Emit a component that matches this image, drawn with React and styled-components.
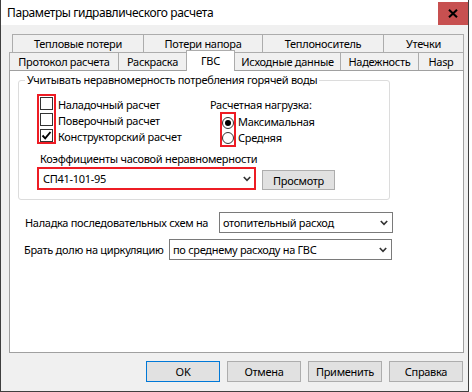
import React from "react";
import styled, { createGlobalStyle } from "styled-components";

const Global = createGlobalStyle`
  html, body { margin: 0; padding: 0; background: #ffffff; }
  body {
    font-family: "Noto Sans", "Open Sans", sans-serif;
    font-size: 11px;
    letter-spacing: -0.3px;
    color: #000;
  }
  * { box-sizing: border-box; }
`;

const Window = styled.div`
  width: 469px;
  height: 392px;
  border: 1px solid #3f3f3f;
  border-top: none;
  background: #f0f0f0;
  display: flex;
  flex-direction: column;
`;

const TitleBar = styled.div`
  height: 25px;
  background: #ffffff;
  display: flex;
  align-items: flex-start;
  justify-content: space-between;
`;

const Title = styled.div`
  padding-left: 6px;
  line-height: 25px;
  font-size: 12px;
  letter-spacing: -0.4px;
`;

const CloseButton = styled.div`
  width: 30px;
  height: 23px;
  margin-top: 2px;
  background: #c75050;
  display: flex;
  align-items: center;
  justify-content: center;
`;

const Body = styled.div`
  flex: 1;
  padding: 9px 0 0 8px;
  display: flex;
  flex-direction: column;
`;

const TabRow = styled.div`
  display: flex;
  height: 19px;
  align-items: flex-start;
  margin-left: ${(p) => p.$indent || 0}px;
  margin-bottom: -1px;
`;

const Tab = styled.div`
  width: ${(p) => p.$w}px;
  height: ${(p) => (p.$active ? 21 : 19)}px;
  margin-top: ${(p) => (p.$active ? -2 : 0)}px;
  margin-left: -1px;
  &:first-child { margin-left: 0; }
  border: 1px solid #acacac;
  border-bottom: ${(p) => (p.$active ? "none" : "1px solid #acacac")};
  background: ${(p) => (p.$active ? "#ffffff" : "#f0f0f0")};
  position: relative;
  z-index: ${(p) => (p.$active ? 2 : 1)};
  display: flex;
  justify-content: center;
  align-items: ${(p) => (p.$active ? "flex-start" : "center")};
  padding-top: ${(p) => (p.$active ? 2 : 0)}px;
  line-height: 15px;
  white-space: nowrap;
`;

const Panel = styled.div`
  width: 455px;
  height: 283px;
  background: #ffffff;
  border: 1px solid #a0a0a0;
  padding: 9px 0 0 8px;
  display: flex;
  flex-direction: column;
  position: relative;
  z-index: 1;
`;

const Group = styled.div`
  position: relative;
  width: 372px;
  height: 120px;
  border: 1px solid #dcdcdc;
  border-radius: 3px;
  padding: 13px 0 0 18px;
  display: flex;
  flex-direction: column;
`;

const Legend = styled.div`
  position: absolute;
  left: 6px;
  top: -8px;
  padding: 0 2px;
  background: #ffffff;
  line-height: 14px;
  white-space: nowrap;
`;

const TopArea = styled.div`
  display: flex;
  height: 52px;
`;

const CheckCol = styled.div`
  width: 173px;
  display: flex;
`;

const RedBox = styled.div`
  border: 2px solid #ed1c24;
  display: flex;
  flex-direction: column;
  gap: ${(p) => p.$gap}px;
  padding: ${(p) => p.$pad};
  align-self: flex-start;
`;

const LabelCol = styled.div`
  display: flex;
  flex-direction: column;
  padding-top: ${(p) => p.$top}px;
  margin-left: ${(p) => p.$left}px;
`;

const OptionLabel = styled.div`
  line-height: 16px;
  height: 16px;
  white-space: nowrap;
`;

const Box = styled.div`
  width: 13px;
  height: 13px;
  border: 1px solid #333333;
  background: #ffffff;
  display: flex;
  align-items: center;
  justify-content: center;
`;

const Radio = styled.div`
  width: 12px;
  height: 12px;
  border: 1px solid #333333;
  border-radius: 50%;
  background: #ffffff;
  display: flex;
  align-items: center;
  justify-content: center;
`;

const Dot = styled.div`
  width: 6px;
  height: 6px;
  border-radius: 50%;
  background: #000000;
`;

const RadioCol = styled.div`
  display: flex;
  flex-direction: column;
  padding-top: 3px;
`;

const Caption = styled.div`
  line-height: 15px;
  white-space: nowrap;
  margin-left: ${(p) => p.$left || 0}px;
  margin-top: ${(p) => p.$top || 0}px;
`;

const RadioArea = styled.div`
  display: flex;
  margin-left: 10px;
`;

const ComboRow = styled.div`
  display: flex;
  align-items: flex-end;
  margin-top: 1px;
`;

const RedCombo = styled.div`
  width: 219px;
  height: 23px;
  border: 2px solid #ed1c24;
  background: #ffffff;
  display: flex;
  align-items: center;
  justify-content: space-between;
  padding: 0 3px 0 4px;
`;

const Button = styled.div`
  width: ${(p) => p.$w || 74}px;
  height: ${(p) => p.$h || 21}px;
  margin-left: ${(p) => p.$ml || 0}px;
  background: #e1e1e1;
  border: 1px solid ${(p) => (p.$default ? "#0078d7" : "#adadad")};
  display: flex;
  align-items: center;
  justify-content: center;
  white-space: nowrap;
`;

const SettingRow = styled.div`
  display: flex;
  align-items: center;
  margin-top: ${(p) => p.$top}px;
  margin-left: ${(p) => p.$indent}px;
`;

const SettingLabel = styled.div`
  width: ${(p) => p.$w}px;
  white-space: nowrap;
`;

const Select = styled.div`
  width: ${(p) => p.$w}px;
  height: 21px;
  border: 1px solid #7a7a7a;
  background: #ffffff;
  display: flex;
  align-items: center;
  justify-content: space-between;
  padding: 0 4px 0 3px;
  white-space: nowrap;
`;

const ButtonRow = styled.div`
  width: 455px;
  display: flex;
  justify-content: flex-end;
  gap: 7px;
  padding-right: 1px;
  margin-top: 8px;
`;

const Chevron = () => (
  <svg width="8" height="6" viewBox="0 0 8 6">
    <path d="M0.8 1 L4 4.4 L7.2 1" fill="none" stroke="#333" strokeWidth="1.6" />
  </svg>
);

const Check = () => (
  <svg width="11" height="11" viewBox="0 0 11 11">
    <path d="M1.5 5.5 L4.2 8.3 L9.5 2" fill="none" stroke="#000" strokeWidth="1.9" />
  </svg>
);

const Checkbox = ({ checked }) => <Box>{checked && <Check />}</Box>;
const RadioButton = ({ checked }) => <Radio>{checked && <Dot />}</Radio>;

const rowOne = [
  ["Тепловые потери", 132],
  ["Потери напора", 120],
  ["Теплоноситель", 122],
  ["Утечки", 81],
];
const rowTwo = [
  ["Протокол расчета", 110],
  ["Раскраска", 69],
  ["ГВС", 49, true],
  ["Исходные данные", 107],
  ["Надежность", 79],
  ["Hasp", 46],
];

export default function App() {
  return (
    <>
      <Global />
      <Window>
        <TitleBar>
          <Title>Параметры гидравлического расчета</Title>
          <CloseButton>
            <svg width="10" height="9" viewBox="0 0 10 9">
              <path d="M1 0.8 L9 8.2 M9 0.8 L1 8.2" stroke="#000" strokeWidth="2.1" />
            </svg>
          </CloseButton>
        </TitleBar>
        <Body>
          <TabRow $indent={3}>
            {rowOne.map(([t, w]) => (
              <Tab key={t} $w={w}>{t}</Tab>
            ))}
          </TabRow>
          <TabRow>
            {rowTwo.map(([t, w, a]) => (
              <Tab key={t} $w={w} $active={a}>{t}</Tab>
            ))}
          </TabRow>
          <Panel>
            <Group>
              <Legend>Учитывать неравномерность потребления горячей воды</Legend>
              <TopArea>
                <CheckCol>
                  <RedBox $gap={3} $pad="1px 1px 0 1px">
                    <Checkbox />
                    <Checkbox />
                    <Checkbox checked />
                  </RedBox>
                  <LabelCol $top={3} $left={2}>
                    <OptionLabel>Наладочный расчет</OptionLabel>
                    <OptionLabel>Поверочный расчет</OptionLabel>
                    <OptionLabel>Конструкторский расчет</OptionLabel>
                  </LabelCol>
                </CheckCol>
                <RadioCol>
                  <Caption>Расчетная нагрузка:</Caption>
                  <RadioArea>
                    <RedBox $gap={3} $pad="3px 0 1px 0">
                      <RadioButton checked />
                      <RadioButton />
                    </RedBox>
                    <LabelCol $top={2} $left={2}>
                      <OptionLabel>Максимальная</OptionLabel>
                      <OptionLabel>Средняя</OptionLabel>
                    </LabelCol>
                  </RadioArea>
                </RadioCol>
              </TopArea>
              <Caption $left={3} $top={5}>Коэффициенты часовой неравномерности</Caption>
              <ComboRow>
                <RedCombo>
                  <span>СП41-101-95</span>
                  <Chevron />
                </RedCombo>
                <Button $w={73} $h={20} $ml={6}>Просмотр</Button>
              </ComboRow>
            </Group>
            <SettingRow $top={12} $indent={7}>
              <SettingLabel $w={194}>Наладка последовательных схем на</SettingLabel>
              <Select $w={174}>
                <span>отопительный расход</span>
                <Chevron />
              </Select>
            </SettingRow>
            <SettingRow $top={6} $indent={6}>
              <SettingLabel $w={145}>Брать долю на циркуляцию</SettingLabel>
              <Select $w={223}>
                <span>по среднему расходу на ГВС</span>
                <Chevron />
              </Select>
            </SettingRow>
          </Panel>
          <ButtonRow>
            <Button $default>OK</Button>
            <Button>Отмена</Button>
            <Button>Применить</Button>
            <Button>Справка</Button>
          </ButtonRow>
        </Body>
      </Window>
    </>
  );
}
